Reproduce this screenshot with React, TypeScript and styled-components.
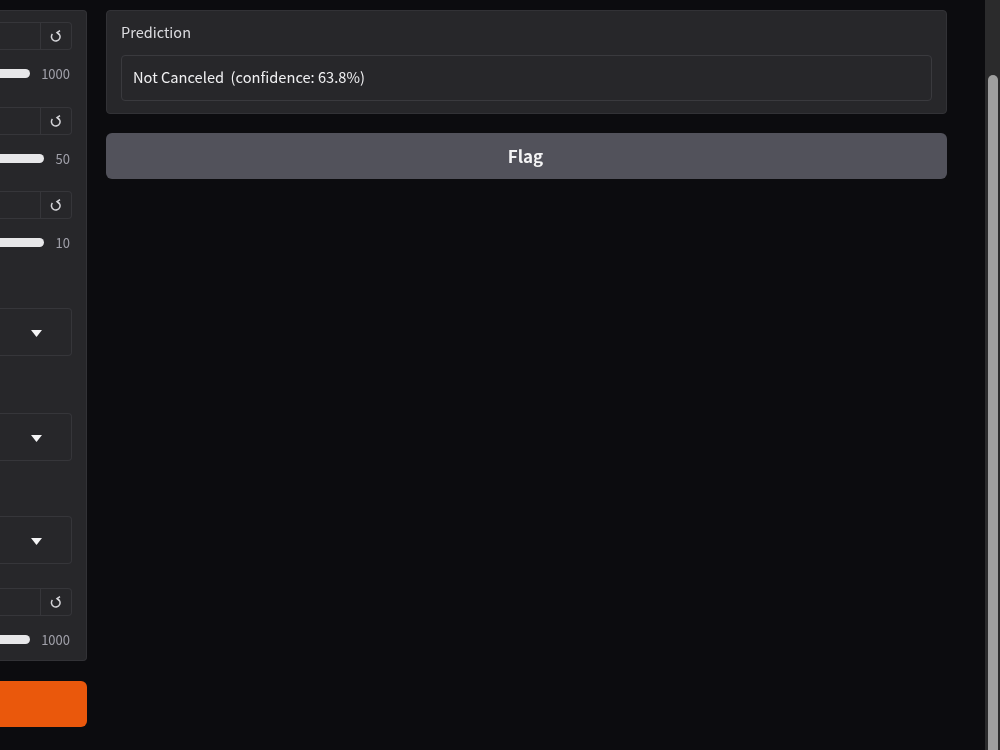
import React from "react";
import styled, { createGlobalStyle } from "styled-components";

const GlobalStyle = createGlobalStyle`
	html, body {
		margin: 0;
		height: 100%;
		overflow: hidden;
		background: #0c0c0f;
	}
	body {
		font-family: "Noto Sans CJK SC", "Noto Sans", sans-serif;
	}
`;

const Shell = styled.div`
	display: flex;
	width: 1000px;
	height: 750px;
	overflow: hidden;
	background: #0c0c0f;
	filter: blur(0.35px);
`;

const Page = styled.div`
	flex: 1;
	display: grid;
	grid-template-columns: 87px 841px;
	column-gap: 19px;
	align-items: start;
	padding-top: 10px;
`;

const LeftColumn = styled.div`
	display: flex;
	flex-direction: column;
	gap: 20px;
`;

const Panel = styled.section`
	display: flex;
	flex-direction: column;
	height: 651px;
	box-sizing: border-box;
	padding: 11px 14px 0 0;
	background: #27272a;
	border: 1px solid #323236;
	border-left: 0;
	border-radius: 0 4px 4px 0;
`;

const Field = styled.div<{ $top?: number }>`
	display: flex;
	flex-direction: column;
	margin-top: ${({ $top }) => $top ?? 0}px;
`;

const NumberBox = styled.div`
	display: flex;
	justify-content: flex-end;
	height: 28px;
	box-sizing: border-box;
	border: 1px solid #36363a;
	border-left: 0;
	border-radius: 0 4px 4px 0;
`;

const ResetButton = styled.div`
	width: 30px;
	border-left: 1px solid #36363a;
	display: flex;
	align-items: center;
	justify-content: center;
`;

const ResetIcon = styled.svg`
	width: 12px;
	height: 12px;
	display: block;
	fill: none;
	stroke: #d4d4d8;
	stroke-width: 1.5;
`;

const SliderRow = styled.div`
	display: flex;
	align-items: center;
	gap: 11.5px;
	height: 9px;
	margin-top: 19px;
	padding-right: 2px;
`;

const SliderTrack = styled.div`
	flex: 1;
	height: 9px;
	background: #e7e7e9;
	border-radius: 0 5px 5px 0;
`;

const SliderValue = styled.span`
	font-size: 13px;
	line-height: 9px;
	color: #a1a1aa;
`;

const Dropdown = styled.div<{ $top: number }>`
	display: flex;
	justify-content: flex-end;
	align-items: center;
	height: 48px;
	box-sizing: border-box;
	margin-top: ${({ $top }) => $top}px;
	padding-right: 29px;
	border: 1px solid #36363a;
	border-left: 0;
	border-radius: 0 4px 4px 0;
`;

const Caret = styled.svg`
	width: 11px;
	height: 7px;
	display: block;
	margin-top: 2px;
`;

const SubmitButton = styled.div`
	height: 46px;
	background: #ea580c;
	border-radius: 0 6px 6px 0;
`;

const RightColumn = styled.div`
	display: flex;
	flex-direction: column;
	gap: 19px;
`;

const OutputCard = styled.section`
	height: 104px;
	box-sizing: border-box;
	padding: 11px 14px 12px;
	background: #27272a;
	border: 1px solid #323236;
	border-radius: 4px;
`;

const OutputLabel = styled.div`
	font-size: 14.5px;
	line-height: 20px;
	color: #dcdce0;
`;

const OutputBox = styled.div`
	display: flex;
	align-items: center;
	height: 46px;
	box-sizing: border-box;
	margin-top: 13px;
	padding: 0 0 3px 11px;
	border: 1px solid #3a3a3e;
	border-radius: 4px;
	font-size: 14.65px;
	color: #f0f0f2;
	white-space: pre;
`;

const FlagButton = styled.div`
	display: flex;
	align-items: center;
	justify-content: center;
	height: 46px;
	padding: 0 2px 2px 0;
	box-sizing: border-box;
	background: #52525b;
	border-radius: 6px;
	color: #f4f4f5;
	font-size: 17px;
	font-weight: 700;
`;

const ScrollTrack = styled.aside`
	display: flex;
	width: 15px;
	height: 750px;
	box-sizing: border-box;
	padding: 75px 2px 0 3px;
	background: #2b2b2c;
`;

const ScrollThumb = styled.div`
	flex: 1;
	background: #9f9f9f;
	border-radius: 5px 5px 0 0;
`;

const sliders = [
	{ value: "1000", top: 0 },
	{ value: "50", top: 29 },
	{ value: "10", top: 28 },
];

function NumberField({ value, top }: { value: string; top: number }) {
	return (
		<Field $top={top}>
			<NumberBox>
				<ResetButton>
					<ResetIcon viewBox="0 0 12 12">
						<path d="M7 2.6A4.3 4.3 0 1 1 2.4 4" />
						<path d="M10 0.6 7 2.6 9.6 5" />
					</ResetIcon>
				</ResetButton>
			</NumberBox>
			<SliderRow>
				<SliderTrack />
				<SliderValue>{value}</SliderValue>
			</SliderRow>
		</Field>
	);
}

function Select({ top }: { top: number }) {
	return (
		<Dropdown $top={top}>
			<Caret viewBox="0 0 11 7">
				<path d="M0 0h11L5.5 7z" fill="#f4f4f5" />
			</Caret>
		</Dropdown>
	);
}

export default function App() {
	return (
		<Shell>
			<GlobalStyle />
			<Page>
				<LeftColumn>
					<Panel>
						{sliders.map((s) => (
							<NumberField key={s.value} value={s.value} top={s.top} />
						))}
						<Select top={61} />
						<Select top={57} />
						<Select top={55} />
						<NumberField value="1000" top={24} />
					</Panel>
					<SubmitButton />
				</LeftColumn>
				<RightColumn>
					<OutputCard>
						<OutputLabel>Prediction</OutputLabel>
						<OutputBox>Not Canceled  (confidence: 63.8%)</OutputBox>
					</OutputCard>
					<FlagButton>Flag</FlagButton>
				</RightColumn>
			</Page>
			<ScrollTrack>
				<ScrollThumb />
			</ScrollTrack>
		</Shell>
	);
}
